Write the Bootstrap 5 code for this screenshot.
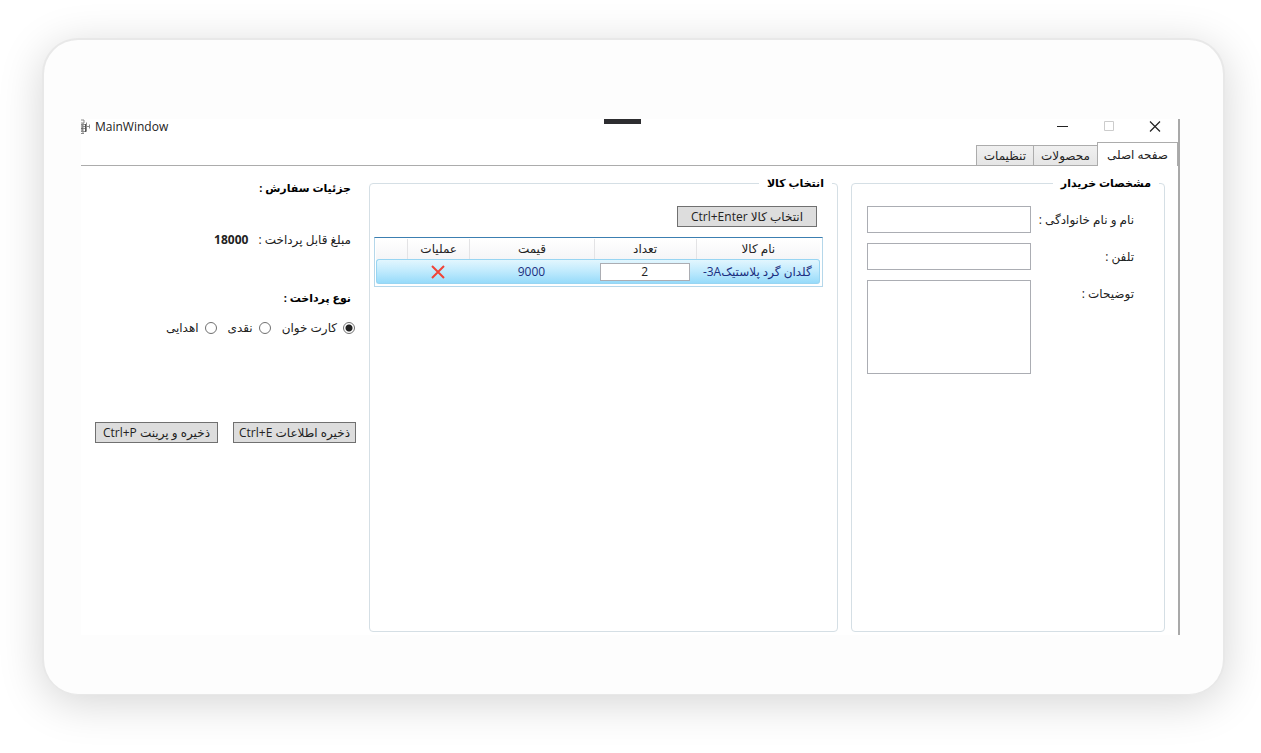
<!DOCTYPE html>
<html lang="fa">
<head>
<meta charset="utf-8">
<meta name="viewport" content="width=device-width, initial-scale=1">
<title>MainWindow</title>
<link href="https://cdn.jsdelivr.net/npm/bootstrap@5.3.0/dist/css/bootstrap.min.css" rel="stylesheet">
<style>
  body { background: #fff; color: #222; font-family: "Open Sans", "DejaVu Sans", sans-serif; font-size: 12px; line-height: 18px; }
  .stage { padding: 38px 36px 58px 42px; }
  .frame { background: #fdfdfd; border: 2px solid #e8e8e8; border-bottom-width: 1px; border-radius: 36px; padding: 79px 43px 59px 37px; box-shadow: 0 8px 44px rgba(0,0,0,.17); }
  .app { background: #fff; border-right: 2px solid #a9a9a9; }
  .titlebar { height: 23px; }
  .titlebar .grip { width: 37px; height: 5px; background: #2d2d30; left: 523px; }
  .titlebar button { border: 0; background: none; padding: 0; width: 46px; height: 16px; }
  .titlebar button svg { display: block; margin: auto; }
  .titlebar .caption { line-height: 16px; }
  .tabs { border-bottom: 1px solid #acacac; height: 24px; }
  .tabs button { border: 1px solid #acacac; border-bottom: 0; border-radius: 0; background: linear-gradient(#f0f0f0, #e5e5e5); color: #222; padding: 0 7px; height: 20px; line-height: 20px; margin-left: -1px; }
  .tabs button.active { background: #fff; height: 24px; margin-bottom: -1px; padding: 0 9px; line-height: 22px; }
  .panes { display: grid; grid-template-columns: 314fr 469fr 275fr; gap: 13px; padding: 8px 13px 3px 0; }
  .group { border: 1px solid #d5dfe5; border-radius: 4px; padding: 0 5px 0 4px; }
  .heading, .group legend, .pay legend { font-size: 11px; line-height: 18px; font-weight: 700; color: #000; }
  .group legend { float: none; width: auto; padding: 0 8px; margin: 0; }
  .fields { display: grid; grid-template-columns: 103px 1fr; gap: 10px 0; padding: 14px 25px 0 11px; }
  .fields label { padding-top: 5px; }
  .box { border: 1px solid #abadb3; border-radius: 0; background: #fff; padding: 0 4px; width: 100%; height: 27px; }
  textarea.box { height: 94px; resize: none; display: block; }
  .wbtn { border: 1px solid #707070; border-radius: 0; background: #ddd; color: #222; padding: 0 5px; height: 21px; line-height: 18px; white-space: nowrap; }
  .wide { width: 140px; margin: 14px 15px 0 0; }
  .gridbox { border: 1px solid #b5d7ea; border-top-color: #3c7fb1; padding: 1px 2px 2px 1px; margin: 10px 9px 0 0; }
  .goods { width: 100%; table-layout: fixed; text-align: center; border-collapse: separate; border-spacing: 0; }
  .goods th { height: 20px; padding: 0; line-height: 20px; font-weight: 400; border-left: 1px solid #e3e3e5; background: linear-gradient(#fff, #f5f5f7); }
  .goods th:last-child { border-left: 0; }
  .goods td { height: 25px; padding: 0; color: #1b2f80; white-space: nowrap; background: linear-gradient(#e2f6fe, #bfeafd 50%, #97dbfa); border: 1px solid #98d5f2; border-width: 1px 0; }
  .goods td:first-child { border-right-width: 1px; border-radius: 0 3px 3px 0; }
  .goods td:last-child { border-left-width: 1px; border-radius: 3px 0 0 3px; }
  .qty { border: 1px solid #abadb3; width: 90px; height: 18px; padding: 0; text-align: center; color: #222; display: block; margin: 0 auto; }
  .order { padding: 5px 5px 0 14px; }
  .amount { margin-top: 34px; }
  .amount strong { margin-inline-start: 10px; }
  .pay { margin-top: 40px; }
  .pay legend { float: none; margin: 0 0 12px; }
  .choices { margin-right: -4px; gap: 11px; }
  .choices label { gap: 6px; }
  .choices input { appearance: none; width: 12px; height: 12px; margin: 0; border: 1px solid #707070; border-radius: 50%; background: #fff; }
  .choices input:checked { background: radial-gradient(circle, #212121 3px, #fff 4px); }
  .actions { margin: 85px -5px 0 0; gap: 15px; }
  .actions .wbtn { flex: 1 1 0; max-width: 124px; }
</style>
</head>
<body>
<div class="stage min-vh-100 d-flex">
  <main class="frame flex-fill d-flex">
    <div class="app flex-fill d-flex flex-column">
      <header class="titlebar position-relative d-flex align-items-start justify-content-between">
        <div class="caption d-flex align-items-start">
          <svg width="14" height="16" viewBox="0 0 14 16" fill="none" stroke="#8a8a8a" aria-hidden="true"><path d="M0 1h3v3H0M2 4v11M0 5.500h5v7H0M5.500 3.500v9M2 7.500h7M8.500 5.500v4M0 9.500h4M0 14.500h3" /><path d="M1 6v6M4.500 5v8" stroke="#555"/></svg>
          <span>MainWindow</span>
        </div>
        <div class="grip position-absolute top-0"></div>
        <div class="d-flex">
          <button type="button" aria-label="Minimize"><svg width="12" height="16" stroke="#222"><path d="M0 7.500h11"/></svg></button>
          <button type="button" aria-label="Maximize" disabled><svg width="12" height="16" fill="none" stroke="#ccc"><path d="M1.500 2.500h9v9h-9z"/></svg></button>
          <button type="button" aria-label="Close"><svg width="12" height="16" stroke="#222" stroke-width="1.200"><path d="M1 2.500l10 10M11 2.500l-10 10"/></svg></button>
        </div>
      </header>
      <nav class="tabs d-flex align-items-end" dir="rtl" role="tablist">
        <button type="button" class="active" role="tab" aria-selected="true">صفحه اصلی</button>
        <button type="button" role="tab">محصولات</button>
        <button type="button" role="tab">تنظیمات</button>
      </nav>
      <form class="panes flex-fill" dir="rtl">
        <fieldset class="group">
          <legend>مشخصات خریدار</legend>
          <div class="fields">
            <label for="name">نام و نام خانوادگی :</label><input id="name" class="box" type="text">
            <label for="tel">تلفن :</label><input id="tel" class="box" type="text">
            <label for="note">توضیحات :</label><textarea id="note" class="box"></textarea>
          </div>
        </fieldset>
        <fieldset class="group">
          <legend>انتخاب کالا</legend>
          <div class="d-flex flex-column">
            <button type="button" class="wbtn wide">انتخاب کالا Ctrl+Enter</button>
            <div class="gridbox">
              <table class="goods">
                <colgroup><col style="width:28%"><col style="width:23%"><col style="width:28%"><col style="width:14%"><col style="width:7%"></colgroup>
                <thead><tr><th>نام کالا</th><th>تعداد</th><th>قیمت</th><th>عملیات</th><th></th></tr></thead>
                <tbody><tr>
                  <td>گلدان گرد پلاستیک3A-</td>
                  <td><input class="qty" type="text" value="2" aria-label="تعداد"></td>
                  <td>9000</td>
                  <td><svg width="14" height="14" stroke="#f04438" stroke-width="2" role="img" aria-label="حذف"><path d="M1 1l12 12M13 1L1 13"/></svg></td>
                  <td></td>
                </tr></tbody>
              </table>
            </div>
          </div>
        </fieldset>
        <section class="order">
          <div class="heading">جزئیات سفارش :</div>
          <div class="amount d-flex"><span>مبلغ قابل پرداخت :</span><strong>18000</strong></div>
          <fieldset class="pay">
            <legend>نوع پرداخت :</legend>
            <div class="choices d-flex">
              <label class="d-flex align-items-center"><input type="radio" name="pay" checked>کارت خوان</label>
              <label class="d-flex align-items-center"><input type="radio" name="pay">نقدی</label>
              <label class="d-flex align-items-center"><input type="radio" name="pay">اهدایی</label>
            </div>
          </fieldset>
          <div class="actions d-flex">
            <button type="button" class="wbtn">ذخیره اطلاعات Ctrl+E</button>
            <button type="button" class="wbtn">ذخیره و پرینت Ctrl+P</button>
          </div>
        </section>
      </form>
    </div>
  </main>
</div>
<script src="https://cdn.jsdelivr.net/npm/bootstrap@5.3.0/dist/js/bootstrap.bundle.min.js"></script>
</body>
</html>
